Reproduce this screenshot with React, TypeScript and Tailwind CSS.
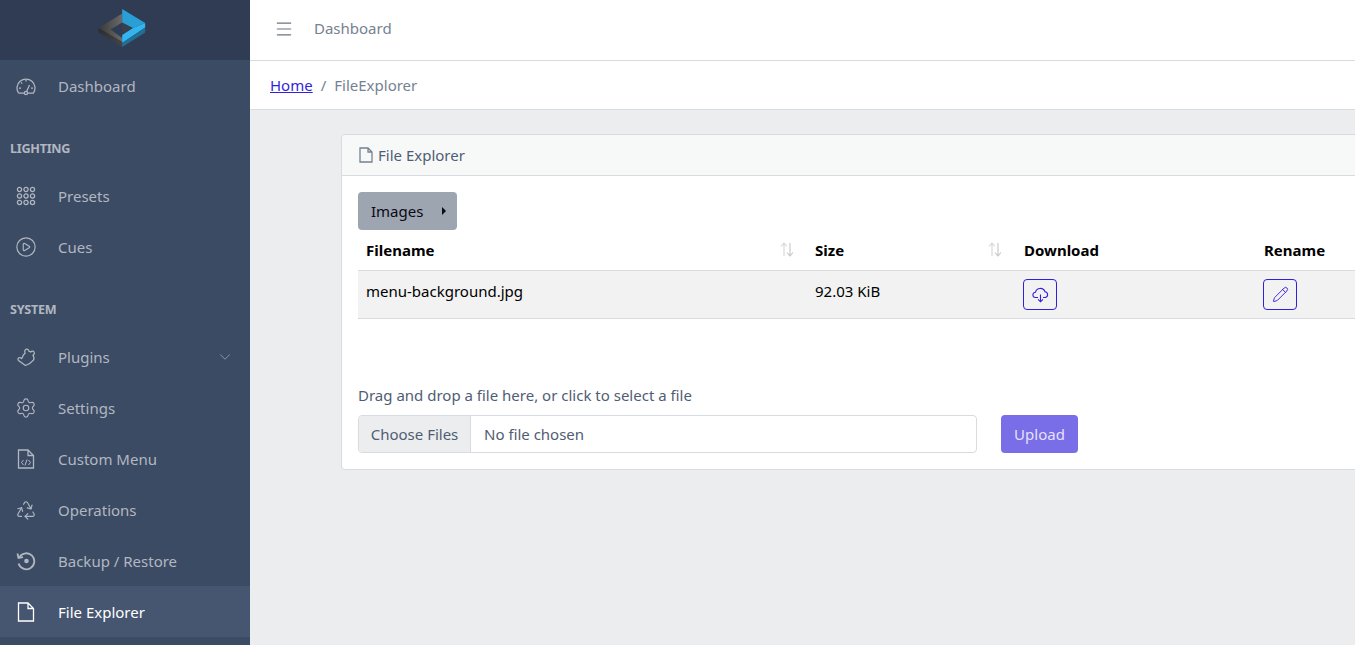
import { ChevronDown, CirclePlay, Menu, Pencil, Recycle, Settings } from "lucide-react";
import type { ReactNode } from "react";

const FONT = "font-['Noto_Sans',sans-serif]";

function Logo() {
  return (
    <svg width="48" height="40" viewBox="98.5 8 48 40">
      <defs>
        <linearGradient id="lg1" x1="0" y1="0" x2="1" y2="0">
          <stop offset="0" stopColor="#383838" />
          <stop offset="1" stopColor="#6a6a6a" />
        </linearGradient>
        <linearGradient id="lg2" x1="0" y1="0" x2="1" y2="1">
          <stop offset="0" stopColor="#2a2c2e" />
          <stop offset="1" stopColor="#454648" />
        </linearGradient>
      </defs>
      <polygon points="99,28 122.7,13.5 122.7,22.5 111,29.5 122.7,38 122.7,42" fill="url(#lg1)" />
      <polygon points="99,28 122.7,42 122.7,47 99,32.5" fill="url(#lg2)" />
      <polygon points="122.7,22.5 133,28.5 122.7,34" fill="#3a3f4d" />
      <polygon points="122.7,9 145.7,23 133.5,28 122.7,22.5" fill="#2a9fd6" />
      <polygon points="145.7,23 145.7,27.5 122.7,43 122.7,35 133.5,28" fill="#34b4ee" />
      <polygon points="145.7,27.5 145.7,32.5 122.7,47 122.7,43" fill="#1f6f96" />
    </svg>
  );
}

function Ico({ children }: { children: ReactNode }) {
  return (
    <svg width="20" height="20" viewBox="0 0 20 20" fill="none" stroke="currentColor" strokeWidth="1.25">
      {children}
    </svg>
  );
}

function Gauge() {
  return (
    <Ico>
      <path d="M2.5 17 A9 9 0 1 1 17.5 17 H12 M8 17 H2.5" />
      <circle cx="10" cy="17" r="1.6" />
      <path d="M10.6 15.5 L13.5 9 M10 3.5 V5.5 M5 6.5 L6.2 7.6 M3 12 H5 M15 12 H17" />
    </Ico>
  );
}

function Dots() {
  const xs = [3.5, 10, 16.5];
  return (
    <Ico>
      {xs.map(y => xs.map(x => <circle key={`${x}-${y}`} cx={x} cy={y} r="2.1" />))}
    </Ico>
  );
}

function Puzzle() {
  return (
    <Ico>
      <path d="M9.5 18.5 L2.5 13.5 C1.5 12.5 2 10.8 3.4 10.6 C4.4 10.4 5.2 11 5.6 11.6 C6.8 10.8 6.8 9.8 7 8.6 L9.2 6 C8.2 4.6 8.8 2.6 10.4 2.2 C11.8 1.9 13 3 13 4.4 L14.8 5 C15.6 4 17.2 3.8 18 5 C18.8 6.2 18.2 7.6 17 8.2 C18 10 18.4 11.6 17.4 13.2 C15.6 15.4 13 17.4 9.5 18.5 Z" />
    </Ico>
  );
}

function FileIco({ code }: { code?: boolean }) {
  return (
    <Ico>
      <path d="M2.5 1 H12 L17.5 6.5 V19 H2.5 Z M12 1 V6.5 H17.5" strokeWidth="1.3" />
      {code && <path d="M7.5 11 L5.5 13.5 L7.5 16 M12.5 11 L14.5 13.5 L12.5 16 M11 10.5 L9 16.5" strokeWidth="1" />}
    </Ico>
  );
}

function Restore() {
  return (
    <svg width="20" height="20" viewBox="0 0 20 20" fill="none" stroke="currentColor" strokeWidth="1.8">
      <path d="M3.5 6 A8 8 0 1 1 2.6 12.5" />
      <path d="M1.5 2.5 L2.5 7 L7 6.2" />
      <circle cx="10.5" cy="10" r="2.3" fill="currentColor" stroke="none" />
    </svg>
  );
}

function CloudDown() {
  return (
    <svg width="17" height="17" viewBox="0 0 17 17" fill="none" stroke="currentColor" strokeWidth="1.1">
      <path d="M6 11.5 H3.6 A2.6 2.6 0 0 1 3.4 6.3 A5 5 0 0 1 13 5.8 A2.9 2.9 0 0 1 13.4 11.5 H11" />
      <path d="M8.5 8.5 V15.8 M6 13.3 L8.5 15.8 L11 13.3" />
    </svg>
  );
}

function NavItem({ icon, label, active, chevron }: { icon: ReactNode; label: string; active?: boolean; chevron?: boolean }) {
  return (
    <div className={`flex items-center h-[51px] pl-4 pr-4 text-[15px] ${active ? "bg-[#465670] text-white" : "text-[#b1b7c1]"}`}>
      <span className={`w-[42px] flex ${active ? "text-white" : "text-[#b1b7c1]"}`}>{icon}</span>
      <span className="flex-1 pt-[2px]">{label}</span>
      {chevron && <ChevronDown size={18} strokeWidth={1} className="text-[#a3abb8]" />}
    </div>
  );
}

function NavTitle({ children }: { children: ReactNode }) {
  return <div className="mt-4 px-[10px] pt-3 pb-3 text-[12.6px] leading-[19px] font-bold uppercase text-[#b1b7c1] tracking-[-0.25px]">{children}</div>;
}

function SortIcon() {
  return (
    <svg width="14" height="15" viewBox="0 0 14 15" fill="none" stroke="#d3d5d8" strokeWidth="1.1">
      <path d="M4 14 V1 M1 4.5 L4 1 L7 4.5" />
      <path d="M10 1 V14 M7 10.5 L10 14 L13 10.5" stroke="#c4c7cb" />
    </svg>
  );
}

function IconButton({ children }: { children: ReactNode }) {
  return (
    <button className="w-[34px] h-[31px] rounded-[4px] border border-[#321fdb] text-[#321fdb] flex items-center justify-center">
      {children}
    </button>
  );
}

export default function App() {
  return (
    <div className={`flex h-[645px] w-[1355px] overflow-hidden bg-[#ebedef] ${FONT}`}>
      <aside className="w-[250px] shrink-0 bg-[#3c4b64] flex flex-col">
        <div className="h-[60px] bg-[#303c54] flex items-start pl-[98px] pt-2 shrink-0">
          <Logo />
        </div>
        <NavItem icon={<Gauge />} label="Dashboard" />
        <NavTitle>Lighting</NavTitle>
        <NavItem icon={<Dots />} label="Presets" />
        <NavItem icon={<CirclePlay size={22} strokeWidth={1.25} className="-ml-px" />} label="Cues" />
        <NavTitle>System</NavTitle>
        <NavItem icon={<Puzzle />} label="Plugins" chevron />
        <NavItem icon={<Settings size={22} strokeWidth={1.25} className="-ml-px" />} label="Settings" />
        <NavItem icon={<FileIco code />} label="Custom Menu" />
        <NavItem icon={<Recycle size={22} strokeWidth={1.25} className="-ml-px" />} label="Operations" />
        <NavItem icon={<Restore />} label="Backup / Restore" />
        <NavItem icon={<FileIco />} label="File Explorer" active />
      </aside>

      <div className="flex-1 min-w-0 flex flex-col">
        <header className="bg-white border-b border-[#d8dbe0] shrink-0">
          <div className="h-[60px] flex items-center pl-[24px] pb-[3px] text-[15px] text-[#768192]">
            <Menu size={20} strokeWidth={1.4} className="text-[#6b7583]" />
            <span className="ml-[20px]">Dashboard</span>
          </div>
        </header>
        <div className="h-[49px] bg-white border-b border-[#d8dbe0] shrink-0 flex items-center pl-5 text-[15px] text-[#768192]">
          <a className="text-[#321fdb] underline">Home</a>
          <span className="mx-2">/</span>
          <span>FileExplorer</span>
        </div>

        <main className="flex-1 pt-6 pl-[91px] overflow-hidden">
          <section className="w-[1100px] h-[336px] bg-white border border-[#d8dbe0] rounded-[4px]">
            <div className="h-[41px] bg-[#f7f9f9] border-b border-[#d8dbe0] rounded-t-[4px] flex items-center pl-4 text-[15px] text-[#4f5d73]">
              <svg width="16" height="16" viewBox="0 0 16 16" fill="none" stroke="#768192" strokeWidth="1.3" className="mr-[4px]">
                <path d="M2 1 H10 L14 5 V15 H2 Z M10 1 V5 H14" />
              </svg>
              File Explorer
            </div>
            <div className="px-4 pt-4">
              <button className="w-[99px] h-[38px] bg-[#9da5b1] rounded-[4px] flex items-center pl-[13px] text-[15px] text-[#0a0a14]">
                <span className="flex-1 text-left">Images</span>
                <span className="w-0 h-0 mr-[11px] border-y-[4px] border-y-transparent border-l-[4px] border-l-[#0a0a14]" />
              </button>
              <table className="table-fixed w-[1000px] text-[15px] text-black border-collapse">
                <thead>
                  <tr className="h-[40px] border-b border-[#d8dbe0]">
                    <th className="w-[449px] px-2 text-left font-bold relative">
                      Filename
                      <span className="absolute right-[13px] top-[12px]"><SortIcon /></span>
                    </th>
                    <th className="w-[209px] px-2 text-left font-bold relative">
                      Size
                      <span className="absolute right-[14px] top-[12px]"><SortIcon /></span>
                    </th>
                    <th className="w-[240px] px-2 text-left font-bold">Download</th>
                    <th className="px-2 text-left font-bold">Rename</th>
                  </tr>
                </thead>
                <tbody>
                  <tr className="h-[48px] bg-[#f2f2f2] border-b border-[#d8dbe0]">
                    <td className="px-2 pb-[5px]">menu-background.jpg</td>
                    <td className="px-2 pb-[5px]">92.03 KiB</td>
                    <td className="px-[7px]">
                      <IconButton><CloudDown /></IconButton>
                    </td>
                    <td className="px-[7px]">
                      <IconButton><Pencil size={17} strokeWidth={1.3} /></IconButton>
                    </td>
                  </tr>
                </tbody>
              </table>
              <div className="mt-[65px] text-[15px] leading-[22px] text-[#4f5d73]">Drag and drop a file here, or click to select a file</div>
              <div className="mt-[9px] flex items-center">
                <div className="w-[619px] h-[38px] rounded-[4px] border border-[#d8dbe0] flex items-center text-[15px] text-[#4f5d73] overflow-hidden">
                  <span className="w-[112px] h-full pt-[2px] bg-[#ebedef] border-r border-[#d8dbe0] flex items-center justify-center shrink-0">Choose Files</span>
                  <span className="pl-[13px] pt-[2px]">No file chosen</span>
                </div>
                <button className="ml-6 w-[77px] h-[38px] pt-[2px] rounded-[4px] bg-[#7a6de8] text-[15px] text-[#e4e1fa]">Upload</button>
              </div>
            </div>
          </section>
        </main>
      </div>
    </div>
  );
}
